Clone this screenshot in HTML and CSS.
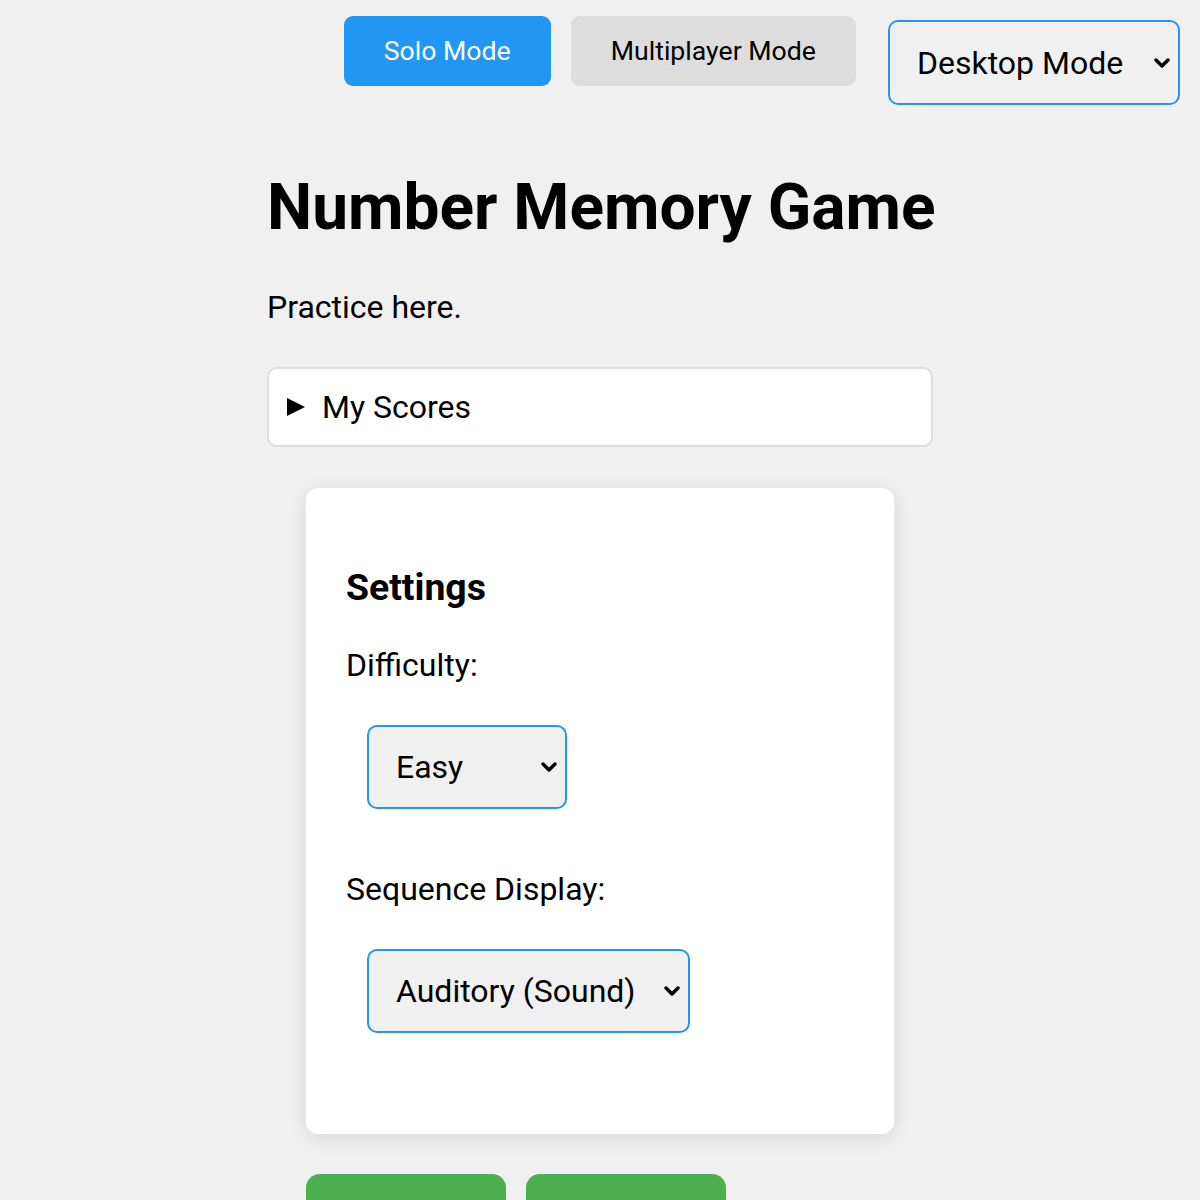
FILE: index.html
```html
<!DOCTYPE html>
<html lang="en">
<head>
  <meta charset="UTF-8">
  <title>Number Memory Game</title>
  <link rel="stylesheet" href="styles.css">
</head>
<body>

  <div class="top-bar">
    <button class="mode-button active">Solo Mode</button>
    <button class="mode-button">Multiplayer Mode</button>
    <span class="select-wrap view-wrap">
      <select class="view-select">
        <option>Desktop Mode</option>
        <option>Mobile Mode</option>
      </select>
      <svg class="chevron" viewBox="0 0 16 10"><path d="M2 2 L8 8 L14 2"/></svg>
    </span>
  </div>

  <div class="container">
    <h1>Number Memory Game</h1>
    <p class="intro">Practice here.</p>

    <details class="scores">
      <summary>My Scores</summary>
      <ul id="scoreList"></ul>
    </details>

    <div class="settings-card">
      <h3>Settings</h3>

      <div class="field">
        <label for="difficulty">Difficulty:</label>
        <span class="select-wrap">
          <select id="difficulty" class="easy-select">
            <option>Easy</option>
            <option>Medium</option>
            <option>Hard</option>
          </select>
          <svg class="chevron" viewBox="0 0 16 10"><path d="M2 2 L8 8 L14 2"/></svg>
        </span>
      </div>

      <div class="field">
        <label for="display">Sequence Display:</label>
        <span class="select-wrap">
          <select id="display">
            <option>Auditory (Sound)</option>
            <option>Visual</option>
          </select>
          <svg class="chevron" viewBox="0 0 16 10"><path d="M2 2 L8 8 L14 2"/></svg>
        </span>
      </div>
    </div>

    <div class="game-buttons">
      <button class="game-button">Start Game</button>
      <button class="game-button">Reset</button>
    </div>
  </div>

</body>
</html>
```

FILE: styles.css
```css
body {
  font-family: Roboto, "Noto Sans", sans-serif;
  font-size: 32px;
  background-color: #f0f0f0;
  color: #000;
  margin: 0;
}

.top-bar {
  display: flex;
  justify-content: flex-end;
  align-items: flex-start;
  gap: 20px;
  padding: 16px 20px 0 0;
}

.mode-button {
  font-family: Roboto, "Noto Sans", sans-serif;
  font-size: 26.67px;
  height: 70px;
  padding: 0 40px;
  border: none;
  border-radius: 9px;
  background-color: #dddddd;
  color: #000;
  cursor: pointer;
}

.mode-button.active {
  background-color: #2196f3;
  color: white;
}

.select-wrap {
  position: relative;
  display: inline-block;
}

select {
  appearance: none;
  -webkit-appearance: none;
  font-family: Roboto, "Noto Sans", sans-serif;
  font-size: 32px;
  color: #000;
  background-color: #f0f0f0;
  border: 2px solid #2196f3;
  border-radius: 10px;
  padding: 0 52px 0 27px;
  height: 84px;
  display: block;
}

.chevron {
  position: absolute;
  right: 10px;
  top: 50%;
  width: 16px;
  height: 10px;
  margin-top: -5px;
  fill: none;
  stroke: #000;
  stroke-width: 3.4;
  stroke-linecap: round;
  stroke-linejoin: round;
  pointer-events: none;
}

.view-wrap {
  margin: 4px 0 0 12px;
}

.view-select {
  height: 85px;
  padding-right: 54px;
}

.container {
  width: 666px;
  margin: 0 auto;
}

h1 {
  font-size: 64px;
  white-space: nowrap;
  margin: 65px 0 43px;
}

.intro {
  margin: 0 0 41px;
}

.scores {
  background-color: white;
  border: 2px solid #dddddd;
  border-radius: 10px;
}

.scores summary {
  list-style: none;
  display: flex;
  align-items: center;
  padding: 19px 18px;
  cursor: pointer;
}

.scores summary::-webkit-details-marker {
  display: none;
}

.scores summary::before {
  content: "";
  border-left: 18px solid #000;
  border-top: 9px solid transparent;
  border-bottom: 9px solid transparent;
  margin-right: 17px;
}

.scores ul {
  margin: 0;
}

.settings-card {
  width: 588px;
  box-sizing: border-box;
  margin: 41px auto 0;
  padding: 40px;
  background-color: white;
  border-radius: 12px;
  box-shadow: 0 4px 20px rgba(0, 0, 0, 0.1);
}

.settings-card h3 {
  font-size: 37.4px;
  margin: 37px 0;
}

.field {
  margin-bottom: 61px;
}

.field label {
  display: block;
}

.field .select-wrap {
  margin: 41px 0 0 21px;
}

.easy-select {
  width: 200px;
}

.game-buttons {
  display: flex;
  gap: 20px;
  width: 588px;
  margin: 40px auto;
}

.game-button {
  font-family: Roboto, "Noto Sans", sans-serif;
  font-size: 26.67px;
  width: 200px;
  height: 100px;
  border: none;
  border-radius: 14px;
  background-color: #4caf50;
  color: white;
  cursor: pointer;
}
```
